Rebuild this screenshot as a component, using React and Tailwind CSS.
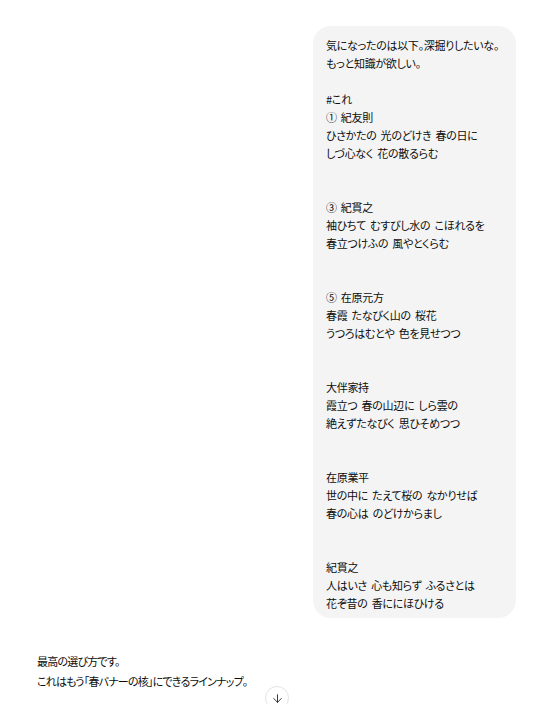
import { ArrowDown } from 'lucide-react'

const MESSAGE = `気になったのは以下。深掘りしたいな。
もっと知識が欲しい。

#これ
① 紀友則
ひさかたの 光のどけき 春の日に
しづ心なく 花の散るらむ


③ 紀貫之
袖ひちて むすびし水の こほれるを
春立つけふの 風やとくらむ


⑤ 在原元方
春霞 たなびく山の 桜花
うつろはむとや 色を見せつつ


大伴家持
霞立つ 春の山辺に しら雲の
絶えずたなびく 思ひそめつつ


在原業平
世の中に たえて桜の なかりせば
春の心は のどけからまし


紀貫之
人はいさ 心も知らず ふるさとは
花ぞ昔の 香ににほひける`

export default function App() {
  return (
    <div className="relative w-[551px] h-[704px] overflow-hidden bg-white text-[#0d0d0d] font-['Noto_Sans_CJK_JP',sans-serif] [font-feature-settings:'palt']">
      {/* user bubble */}
      <div className="flex justify-end pt-[26px] pr-[35px]">
        <div className="w-[203px] bg-[#f4f4f4] rounded-[18px] pl-[13px] pr-2 pt-[10px] pb-[6px]">
          <p className="whitespace-pre text-[11px] leading-[18px] tracking-[-0.3px] [word-spacing:2px]">{MESSAGE}</p>
        </div>
      </div>

      {/* assistant reply */}
      <div className="pl-[37px] pt-[33px] text-[11px] leading-[20px] tracking-[-0.8px]">
        <p>最高の選び方です。</p>
        <p>これはもう「春バナーの核」にできるラインナップ。</p>
      </div>

      {/* scroll down button, floats over the thread */}
      <div className="absolute left-[265px] top-[686px] w-[24px] h-[24px] rounded-full border border-[#e3e3e3] bg-white flex items-center justify-center">
        <ArrowDown size={13} strokeWidth={1.5} />
      </div>
    </div>
  )
}
